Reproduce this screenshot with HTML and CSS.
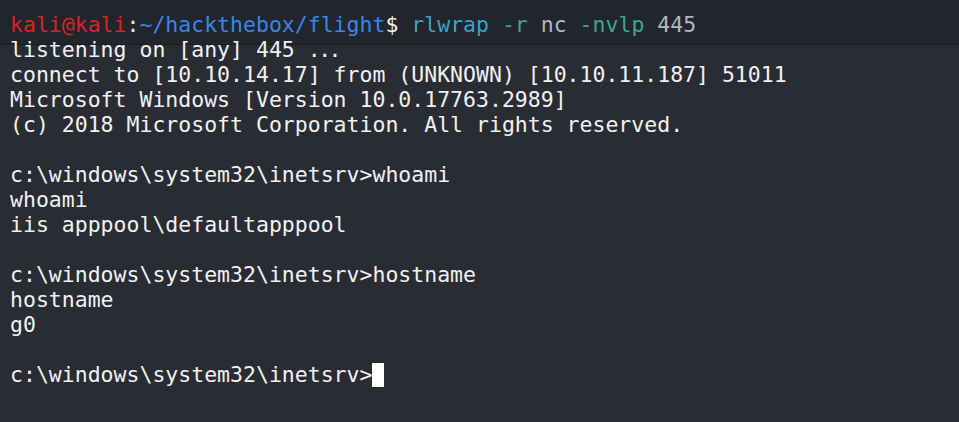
FILE: index.html
```html
<!DOCTYPE html>
<html>
<head>
<meta charset="utf-8">
<link rel="stylesheet" href="styles.css">
</head>
<body>
<div class="term">
<div class="line"><span class="user">kali@kali</span><span class="col">:</span><span class="path">~/hackthebox/flight</span><span class="dollar">$ </span><span class="cmd">rlwrap</span> <span class="flag">-r</span> <span class="arg">nc</span> <span class="flag">-nvlp</span> <span class="arg">445</span></div>
<div class="line">listening on [any] 445 <span class="dots">...</span></div>
<div class="line">connect to [10.10.14.17] from (UNKNOWN) [10.10.11.187] 51011</div>
<div class="line">Microsoft Windows [Version 10.0.17763.2989]</div>
<div class="line">(c) 2018 Microsoft Corporation. All rights reserved.</div>
<div class="line"> </div>
<div class="line">c:\windows\system32\inetsrv&gt;whoami</div>
<div class="line">whoami</div>
<div class="line">iis apppool\defaultapppool</div>
<div class="line"> </div>
<div class="line">c:\windows\system32\inetsrv&gt;hostname</div>
<div class="line">hostname</div>
<div class="line">g0</div>
<div class="line"> </div>
<div class="line">c:\windows\system32\inetsrv&gt;<span class="cursor"></span></div>
</div>
</body>
</html>
```
FILE: styles.css
```css
html, body {
  margin: 0;
  padding: 0;
  height: 100%;
}
body {
  background: linear-gradient(to bottom, #22252c 0, #22252c 44px, #1b1d22 44px, #1b1d22 45px, #2a2c33 45px);
  overflow: hidden;
}
.term {
  padding: 12px 0 0 10px;
  font-family: "DejaVu Sans Mono", "Liberation Mono", monospace;
  font-size: 21.5px;
  line-height: 25px;
  color: #f0f1f3;
}
.line {
  height: 25px;
  white-space: pre;
}
.dots { letter-spacing: -2.5px; }
.user { color: #d8232c; }
.col { color: #e8e8ea; }
.path { color: #3b86e6; }
.dollar { color: #f0f1f3; }
.cmd { color: #3aa3c9; }
.flag { color: #3fa58c; }
.arg { color: #b3b7bf; }
.cursor {
  display: inline-block;
  width: 12px;
  height: 24px;
  background: #ffffff;
  vertical-align: -5px;
}
```
